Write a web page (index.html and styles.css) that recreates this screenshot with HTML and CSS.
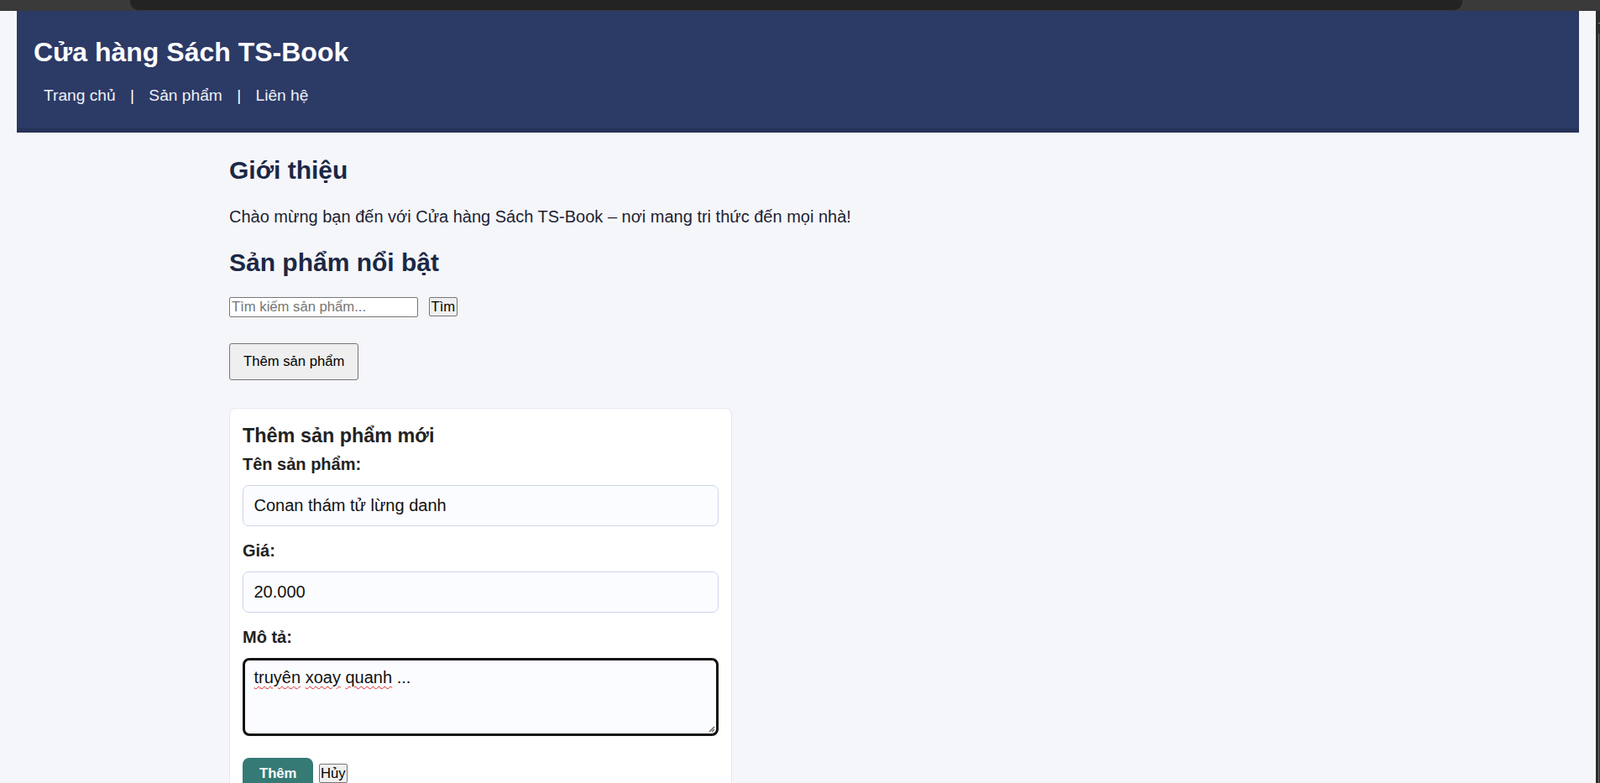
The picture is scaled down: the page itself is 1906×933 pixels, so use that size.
FILE: index.html
```html
<!DOCTYPE html>
<html lang="vi">
<head>
<meta charset="utf-8">
<title>Cửa hàng Sách TS-Book</title>
<link rel="stylesheet" href="styles.css">
</head>
<body>
<div class="chrome"><div class="chrome-tab"></div></div>
<div class="window">
  <div class="page">
    <header class="site-header">
      <h1 class="site-title">Cửa hàng Sách TS-Book</h1>
      <nav class="site-nav"><a href="#">Trang chủ</a> | <a href="#">Sản phẩm</a> | <a href="#">Liên hệ</a></nav>
    </header>
    <main class="main">
      <h2 class="section-title first">Giới thiệu</h2>
      <p class="intro">Chào mừng bạn đến với Cửa hàng Sách TS-Book – nơi mang tri thức đến mọi nhà!</p>
      <h2 class="section-title">Sản phẩm nổi bật</h2>
      <div class="search-row">
        <input class="search-input" type="text" placeholder="Tìm kiếm sản phẩm...">
        <button class="plain-btn">Tìm</button>
      </div>
      <button class="add-toggle">Thêm sản phẩm</button>
      <form class="card">
        <h3 class="card-title">Thêm sản phẩm mới</h3>
        <label class="field-label">Tên sản phẩm:</label>
        <input class="field-input" type="text" value="Conan thám tử lừng danh">
        <label class="field-label">Giá:</label>
        <input class="field-input" type="text" value="20.000">
        <label class="field-label">Mô tả:</label>
        <div class="field-area" role="textbox"><span class="miss">truyên</span> <span class="miss">xoay</span> <span class="miss">quanh</span> ...<svg class="grip" width="9" height="9" viewBox="0 0 9 9"><path d="M8 2 L2 8 M8 5 L5 8" stroke="#555" stroke-width="1.2" fill="none"/></svg></div>
        <div class="actions">
          <button type="button" class="submit-btn">Thêm</button>
          <button type="button" class="plain-btn">Hủy</button>
        </div>
      </form>
    </main>
  </div>
  <div class="scrollbar"><div class="scroll-mark"></div><div class="scroll-thumb"></div></div>
</div>
</body>
</html>
```
FILE: styles.css
```css
html, body {
  margin: 0;
  padding: 0;
}
body {
  height: 933px;
  overflow: hidden;
  display: flex;
  flex-direction: column;
  background: #f5f6fa;
  font-family: "Liberation Sans", Arial, sans-serif;
}
.chrome {
  flex: none;
  height: 13px;
  background: #3a3a3a;
  padding: 0 164px 0 155px;
}
.chrome-tab {
  height: 12px;
  background: #232323;
  border-radius: 0 0 10px 10px;
}
.window {
  flex: 1;
  display: flex;
  min-height: 0;
}
.page {
  flex: 1;
  padding: 0 20px;
  overflow: hidden;
}
.scrollbar {
  width: 5px;
  background: #2c2c2c;
  position: relative;
}
.scroll-mark {
  position: absolute;
  top: 14px;
  left: 3px;
  width: 2px;
  height: 1px;
  background: #8a8a8a;
}
.scroll-thumb {
  position: absolute;
  top: 27px;
  bottom: 0;
  left: 3px;
  width: 1px;
  background: #6e6e6e;
}
.site-header {
  background: #2c3a66;
  border-bottom: 5px solid #263257;
  padding: 30.5px 20px 28.4px;
  color: #fff;
}
.site-title {
  margin: 0 0 22.2px;
  font-size: 32px;
  font-weight: bold;
  line-height: normal;
}
.site-nav {
  font-size: 19.2px;
  line-height: 22px;
  color: #fff;
}
.site-nav a {
  color: #eef0f6;
  text-decoration: none;
  margin: 0 12px;
}
.main {
  max-width: 1355px;
  margin: 0 auto;
}
.section-title {
  font-size: 30px;
  font-weight: bold;
  color: #1b2845;
  margin: 26px 0 0;
  line-height: normal;
}
.section-title.first {
  margin-top: 28px;
}
.intro {
  font-size: 20px;
  color: #1d2233;
  margin: 27.4px 0 0;
  line-height: 23px;
}
.search-row {
  display: flex;
  align-items: center;
  gap: 13px;
  margin-top: 23.4px;
}
.search-input {
  box-sizing: border-box;
  width: 225px;
  height: 24px;
  margin: 0;
  padding: 1px 2px;
  border: 1px solid #767676;
  border-radius: 2px;
  background: #fff;
  font-family: "Liberation Sans", Arial, sans-serif;
  font-size: 16.67px;
}
.search-input::placeholder {
  color: #757575;
}
.plain-btn {
  box-sizing: border-box;
  height: 23px;
  margin: 0;
  padding: 0 1.5px;
  border: 1px solid #767676;
  border-radius: 2px;
  background: #efefef;
  color: #000;
  font-family: "Liberation Sans", Arial, sans-serif;
  font-size: 16.67px;
  line-height: 19px;
}
.add-toggle {
  display: block;
  margin: 31.6px 0 0;
  padding: 11px 16px;
  border: 1px solid #767676;
  border-radius: 3px;
  background: #efefef;
  color: #000;
  font-family: "Liberation Sans", Arial, sans-serif;
  font-size: 16.67px;
  line-height: 19.2px;
}
.card {
  width: 599px;
  box-sizing: border-box;
  margin-top: 33px;
  padding: 19.5px 15px 20px;
  background: #fff;
  border: 1px solid #e4e7f0;
  border-radius: 8px;
}
.card-title {
  margin: 0 0 8.6px;
  font-size: 23.4px;
  font-weight: bold;
  color: #222;
  line-height: 26.9px;
}
.field-label {
  display: block;
  font-size: 20px;
  font-weight: bold;
  color: #222;
  line-height: 23px;
  margin-bottom: 13px;
}
.field-input {
  display: block;
  box-sizing: border-box;
  width: 100%;
  height: 49px;
  margin: 0 0 18px;
  padding: 0 12.5px;
  border: 1px solid #cdd3ea;
  border-radius: 7px;
  background: #fbfcff;
  color: #111;
  font-family: "Liberation Sans", Arial, sans-serif;
  font-size: 20px;
}
.field-area {
  position: relative;
  box-sizing: border-box;
  height: 93px;
  padding: 9px 10.5px;
  border: 3px solid #111;
  border-radius: 8px;
  background: #fbfcff;
  color: #111;
  font-size: 20px;
  line-height: 23px;
}
.miss {
  text-decoration: underline wavy #e02020;
  text-decoration-thickness: 1.3px;
  text-underline-offset: 3px;
}
.grip {
  position: absolute;
  right: 1px;
  bottom: 1px;
}
.actions {
  display: flex;
  align-items: baseline;
  gap: 6.6px;
  margin-top: 26px;
}
.submit-btn {
  margin: 0;
  padding: 9px 20px 10px;
  border: none;
  border-radius: 8px;
  background: #357a75;
  color: #fff;
  font-family: "Liberation Sans", Arial, sans-serif;
  font-size: 16.67px;
  font-weight: bold;
  line-height: 19.2px;
}
.actions .plain-btn {
  height: auto;
  padding: 1px 1px;
  line-height: 19.2px;
}
```
